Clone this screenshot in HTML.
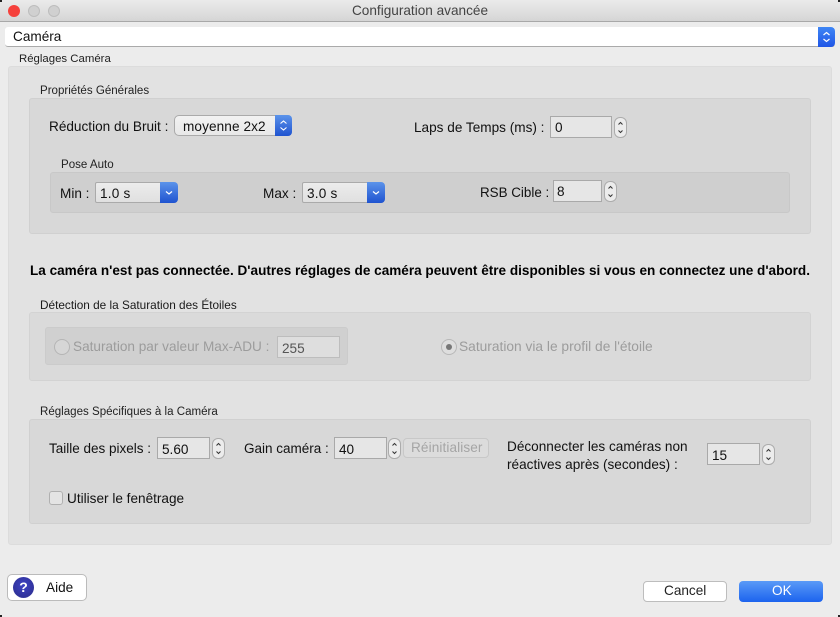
<!DOCTYPE html>
<html><head><meta charset="utf-8"><style>
*{box-sizing:border-box}
html,body{margin:0;padding:0;background:#ececec}
#w{position:relative;width:840px;height:617px;overflow:hidden;background:#ececec;font-family:"Liberation Sans",sans-serif;color:#111;font-size:13.6px}
#w div,#w span.t{position:absolute}
.t{white-space:nowrap;line-height:16px}
.s{font-size:11.55px;color:#222}
.l{font-size:13.6px}
.box{border-radius:3px}
.in{background:#e6e6e6;border:1px solid #a9a9a9;font-size:13.6px;padding:3px 0 0 4px;line-height:15px}
.spin{background:#ececec;border:1px solid #acacac;border-radius:6px;width:13px;height:21px}
.pop{background:linear-gradient(#ececec,#e0e0e0);border:1px solid #aaa;border-radius:3px}
.arr{background:linear-gradient(#5b93ea,#1f53d0);border-radius:0 4px 4px 0}
svg{position:absolute;left:0;top:0}
</style></head><body><div id="w">
<div style="left:0;top:0;width:840px;height:22px;background:linear-gradient(#ebebeb,#d5d5d5);border-bottom:1px solid #a8a8a8"></div>
<div style="left:8px;top:5px;width:12px;height:12px;border-radius:50%;background:#f5413c"></div>
<div style="left:28px;top:5px;width:12px;height:12px;border-radius:50%;background:#d0d0d0;border:1px solid #bdbdbd"></div>
<div style="left:48px;top:5px;width:12px;height:12px;border-radius:50%;background:#d0d0d0;border:1px solid #bdbdbd"></div>
<span class="t" style="left:0;width:840px;text-align:center;top:3px;color:#444">Configuration avancée</span>

<div style="left:5px;top:27px;width:830px;height:20px;background:#fff;border-bottom:1px solid #aaa;border-radius:3px"></div>
<div class="arr" style="left:818px;top:27px;width:17px;height:20px;background:linear-gradient(#3f86f5,#1f55e6)"><svg width="17" height="20" fill="none" stroke="#fff" stroke-width="1.2"><path d="M5.500 8l3-2.500 3 2.500M5.500 12l3 2.500 3-2.500"/></svg></div>
<span class="t" style="left:13px;top:29px">Caméra</span>

<span class="t s" style="left:19px;top:51px;font-size:11.4px">Réglages Caméra</span>
<div class="box" style="left:8px;top:66px;width:824px;height:479px;background:#e2e2e2;border:1px solid #dcdcdc"></div>

<span class="t s" style="left:40px;top:83px">Propriétés Générales</span>
<div class="box" style="left:29px;top:98px;width:782px;height:136px;background:#d8d8d8;border:1px solid #d0d0d0"></div>

<span class="t l" style="left:49px;top:119px">Réduction du Bruit :</span>
<div class="pop" style="left:174px;top:115px;width:118px;height:21px;background:linear-gradient(#f2f2f2,#e8e8e8);border-radius:5px"></div>
<div class="arr" style="left:275px;top:115px;width:17px;height:21px"><svg width="17" height="21" fill="none" stroke="#fff" stroke-width="1.1"><path d="M5.500 8.500l3-2.500 3 2.500M5.500 12.500l3 2.500 3-2.500"/></svg></div>
<span class="t" style="left:183px;top:119px;letter-spacing:.1px">moyenne 2x2</span>

<span class="t l" style="left:414px;top:120px">Laps de Temps (ms) :</span>
<div class="in" style="left:550px;top:116px;width:62px;height:22px">0</div>
<div class="spin" style="left:614px;top:117px"><svg width="11" height="19" fill="none" stroke="#333" stroke-width="1"><path d="M3.500 6.500l2-2 2 2M3.500 12.500l2 2 2-2"/></svg></div>

<span class="t s" style="left:61px;top:157px">Pose Auto</span>
<div class="box" style="left:50px;top:172px;width:740px;height:41px;background:#cfcfcf;border:1px solid #c8c8c8"></div>
<span class="t l" style="left:60px;top:186px">Min :</span>
<div class="pop" style="left:95px;top:182px;width:70px;height:21px;border-radius:2px 0 0 2px"></div>
<div class="arr" style="left:160px;top:182px;width:18px;height:21px"><svg width="18" height="21" fill="none" stroke="#fff" stroke-width="1.2"><path d="M6 9.500l3 2.500 3-2.500"/></svg></div>
<span class="t" style="left:100px;top:186px;letter-spacing:.2px">1.0 s</span>
<span class="t l" style="left:263px;top:186px">Max :</span>
<div class="pop" style="left:302px;top:182px;width:70px;height:21px;border-radius:2px 0 0 2px"></div>
<div class="arr" style="left:367px;top:182px;width:18px;height:21px"><svg width="18" height="21" fill="none" stroke="#fff" stroke-width="1.2"><path d="M6 9.500l3 2.500 3-2.500"/></svg></div>
<span class="t" style="left:307px;top:186px;letter-spacing:.2px">3.0 s</span>
<span class="t l" style="left:480px;top:185px;font-size:13.4px">RSB Cible :</span>
<div class="in" style="left:553px;top:180px;width:49px;height:22px;padding-left:3px">8</div>
<div class="spin" style="left:604px;top:181px"><svg width="11" height="19" fill="none" stroke="#333" stroke-width="1"><path d="M3.500 6.500l2-2 2 2M3.500 12.500l2 2 2-2"/></svg></div>

<span class="t" style="left:30px;top:263px;font-size:13.57px;font-weight:bold;color:#000">La caméra n'est pas connectée. D'autres réglages de caméra peuvent être disponibles si vous en connectez une d'abord.</span>

<span class="t s" style="left:40px;top:297px;color:#1a1a1a;font-size:11.8px">Détection de la Saturation des Étoiles</span>
<div class="box" style="left:29px;top:312px;width:782px;height:69px;background:#dadada;border:1px solid #d3d3d3"></div>
<div class="box" style="left:45px;top:327px;width:303px;height:38px;background:#d0d0d0;border:1px solid #cbcbcb"></div>
<div style="left:54px;top:339px;width:16px;height:16px;border-radius:50%;background:#d6d6d6;border:1px solid #b5b5b5"></div>
<span class="t l" style="left:73px;top:339px;color:#9c9c9c">Saturation par valeur Max-ADU :</span>
<div class="in" style="left:277px;top:336px;width:63px;height:22px;background:#dedede;border-color:#bdbdbd;color:#555;padding-top:4px">255</div>
<div style="left:441px;top:339px;width:16px;height:16px;border-radius:50%;background:#dedede;border:1px solid #b8b8b8"></div>
<div style="left:446px;top:344px;width:6px;height:6px;border-radius:50%;background:#777"></div>
<span class="t l" style="left:459px;top:339px;color:#9c9c9c;font-size:13.75px">Saturation via le profil de l'étoile</span>

<span class="t s" style="left:40px;top:404px">Réglages Spécifiques à la Caméra</span>
<div class="box" style="left:29px;top:419px;width:782px;height:105px;background:#d8d8d8;border:1px solid #d0d0d0"></div>
<span class="t l" style="left:49px;top:441px;font-size:13.5px">Taille des pixels :</span>
<div class="in" style="left:157px;top:437px;width:53px;height:22px;padding-top:4px">5.60</div>
<div class="spin" style="left:212px;top:438px"><svg width="11" height="19" fill="none" stroke="#333" stroke-width="1"><path d="M3.500 6.500l2-2 2 2M3.500 12.500l2 2 2-2"/></svg></div>
<span class="t l" style="left:244px;top:441px;font-size:13.5px">Gain caméra :</span>
<div class="in" style="left:334px;top:437px;width:53px;height:22px;padding-top:4px">40</div>
<div class="spin" style="left:388px;top:438px"><svg width="11" height="19" fill="none" stroke="#333" stroke-width="1"><path d="M3.500 6.500l2-2 2 2M3.500 12.500l2 2 2-2"/></svg></div>
<div style="left:403px;top:438px;width:86px;height:20px;border:1px solid #c8c8c8;border-radius:4px;background:#dcdcdc"></div>
<span class="t" style="left:411px;top:440px;color:#a5a5a5;letter-spacing:.1px">Réinitialiser</span>
<span class="t l" style="left:507px;top:439px">Déconnecter les caméras non</span>
<span class="t l" style="left:507px;top:457px">réactives après (secondes) :</span>
<div class="in" style="left:707px;top:443px;width:53px;height:22px;padding-top:4px">15</div>
<div class="spin" style="left:762px;top:444px"><svg width="11" height="19" fill="none" stroke="#333" stroke-width="1"><path d="M3.500 6.500l2-2 2 2M3.500 12.500l2 2 2-2"/></svg></div>
<div style="left:49px;top:491px;width:14px;height:14px;border-radius:3px;background:#e4e4e4;border:1px solid #b0b0b0"></div>
<span class="t l" style="left:67px;top:491px">Utiliser le fenêtrage</span>

<div style="left:7px;top:574px;width:80px;height:27px;background:#fff;border:1px solid #bbb;border-radius:5px"></div>
<div style="left:13px;top:577px;width:21px;height:21px;border-radius:50%;background:radial-gradient(circle at 50% 40%,#3d42c4,#30329a 70%,#8a8ac8);color:#fff;font-weight:bold;font-size:14px;line-height:21px;text-align:center">?</div>
<span class="t" style="left:46px;top:580px">Aide</span>

<div style="left:643px;top:581px;width:84px;height:21px;background:#fff;border:1px solid #bdbdbd;border-radius:4px"></div>
<span class="t" style="left:664px;top:583px;color:#222">Cancel</span>
<div style="left:739px;top:581px;width:84px;height:21px;background:linear-gradient(#5a9af7,#1c63ee);border-radius:4px"></div>
<span class="t" style="left:772px;top:583px;color:#fff">OK</span>
<div style="left:0;top:0;width:2px;height:2px;background:#222"></div>
<div style="left:838px;top:0;width:2px;height:2px;background:#222"></div>
<div style="left:0;top:615px;width:2px;height:2px;background:#222"></div>
<div style="left:838px;top:615px;width:2px;height:2px;background:#222"></div>
</div></body></html>
